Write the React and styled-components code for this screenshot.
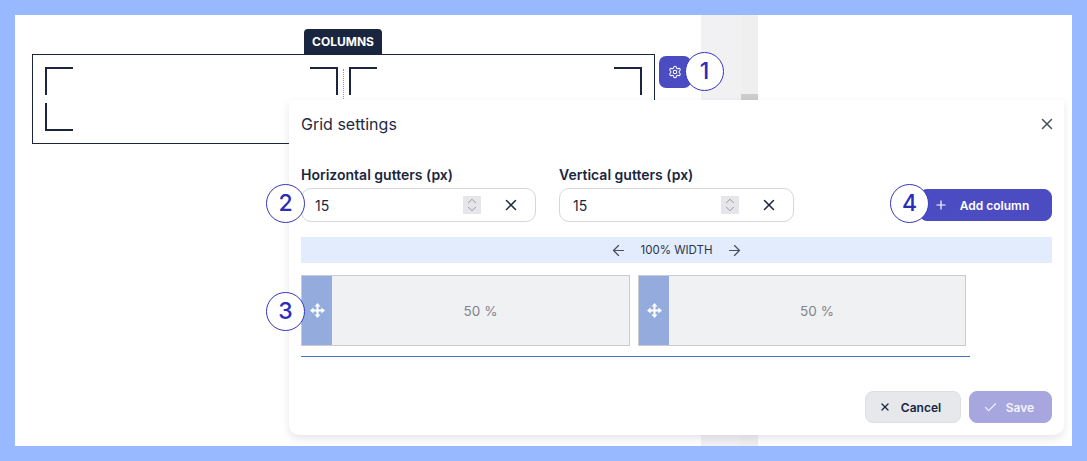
import styled, { createGlobalStyle } from "styled-components";
import { ArrowLeft, ArrowRight, Check, ChevronDown, ChevronUp, Plus, Settings, X } from "lucide-react";

const GlobalStyle = createGlobalStyle`
  html, body {
    margin: 0;
    background: #fff;
  }
  body {
    font-family: Inter, "Liberation Sans", sans-serif;
    color: #1a2640;
  }
  * {
    box-sizing: border-box;
  }
`;

const Frame = styled.div`
  position: relative;
  width: 1087px;
  height: 461px;
  border: 15px solid #98b9ff;
  display: flex;
  overflow: hidden;
`;

const Canvas = styled.div`
  width: 686px;
  padding: 39px 0 0 17px;
  display: flex;
  align-items: flex-start;
  gap: 4px;
`;

const Strip = styled.div`
  width: 57px;
  display: flex;
`;

const StripLeft = styled.div`
  width: 40px;
  background: #f1f1f3;
`;

const StripRight = styled.div`
  flex: 1;
  background: #efefef;
  padding-top: 79px;
`;

const Thumb = styled.div`
  height: 30px;
  background: #cccccc;
`;

const Widget = styled.div`
  position: relative;
  width: 623px;
  height: 90px;
  border: 1px solid #1a2640;
  padding: 12px;
  display: flex;
  justify-content: space-between;
`;

const WidgetTab = styled.div`
  position: absolute;
  left: 271px;
  top: -26px;
  width: 78px;
  height: 25px;
  background: #1a2640;
  color: #fff;
  border-radius: 4px 4px 0 0;
  font-size: 12px;
  font-weight: 700;
  display: flex;
  align-items: center;
  justify-content: center;
`;

const WidgetColumn = styled.div`
  width: 293px;
  display: grid;
  grid-template-columns: 28px 28px;
  grid-template-rows: 28px 28px;
  justify-content: space-between;
  row-gap: 8px;
`;

const Divider = styled.div`
  position: absolute;
  left: 310px;
  top: 14px;
  height: 60px;
  border-left: 1px dotted #999;
`;

const Corner = styled.span`
  border-style: solid;
  border-color: #1a2640;
  border-width: ${(p) => (p.$bottom ? "0 0 2px" : "2px 0 0")};
  border-left-width: ${(p) => (p.$right ? 0 : "2px")};
  border-right-width: ${(p) => (p.$right ? "2px" : 0)};
`;

const GearButton = styled.button`
  position: relative;
  width: 32px;
  height: 32px;
  margin-top: 2px;
  border: 0;
  border-radius: 7px;
  background: #4c4cc2;
  color: #fff;
  display: flex;
  align-items: center;
  justify-content: center;
  padding: 0;
`;

const Marker = styled.span`
  position: absolute;
  width: 39px;
  height: 39px;
  border-radius: 50%;
  border: 1.5px solid #3535c0;
  background: #fff;
  color: #2c2cb8;
  font: 500 23px Inter, sans-serif;
  line-height: 1;
  display: flex;
  align-items: center;
  justify-content: center;
  left: ${(p) => p.$left}px;
  top: ${(p) => p.$top}px;
`;

const Modal = styled.div`
  position: absolute;
  left: 274px;
  top: 85px;
  width: 775px;
  height: 335px;
  background: #fff;
  border-radius: 0 0 10px 10px;
  box-shadow: 0 4px 9px rgba(30, 40, 70, 0.11);
  padding: 12px;
  display: flex;
  flex-direction: column;
`;

const ModalHeader = styled.div`
  height: 24px;
  display: flex;
  align-items: center;
  justify-content: space-between;
  color: #4a4f5c;
  svg {
    margin-right: -4px;
  }
`;

const ModalTitle = styled.h2`
  margin: 0;
  font-size: 16px;
  font-weight: 400;
  color: #1f2a44;
`;

const FieldRow = styled.div`
  margin-top: 31px;
  display: flex;
  align-items: flex-end;
  gap: 23px;
`;

const Field = styled.div`
  position: relative;
  width: 235px;
`;

const FieldLabel = styled.label`
  display: block;
  font-size: 14px;
  line-height: 16px;
  font-weight: 600;
  margin-bottom: 5px;
`;

const InputBox = styled.div`
  height: 34px;
  border: 1px solid #d5d7dd;
  border-radius: 10px;
  padding: 0 15px 0 13px;
  display: flex;
  align-items: center;
`;

const ValueInput = styled.input`
  flex: 1;
  min-width: 0;
  border: 0;
  outline: 0;
  padding: 0;
  font: 400 14px Inter, sans-serif;
  color: #1a2640;
  background: transparent;
`;

const Spinner = styled.span`
  width: 18px;
  height: 18px;
  margin-right: 21px;
  background: #e6e6ea;
  color: #8b8d96;
  display: flex;
  flex-direction: column;
  align-items: center;
  justify-content: center;
  svg {
    margin: -3px 0;
  }
`;

const Button = styled.button`
  height: 32px;
  border-radius: 8px;
  border: 1px solid ${(p) => p.$border};
  background: ${(p) => p.$bg};
  color: ${(p) => p.$color};
  font: 600 12px Inter, sans-serif;
  display: flex;
  align-items: center;
  justify-content: center;
  gap: ${(p) => p.$gap}px;
  padding: 0 ${(p) => p.$trail}px 0 0;
  width: ${(p) => p.$width}px;
`;

const AddButton = styled(Button)`
  position: relative;
  margin-left: auto;
  margin-bottom: 1px;
`;

const WidthBar = styled.div`
  margin-top: 15px;
  height: 26px;
  background: #e2ecfc;
  color: #2b3550;
  font-size: 11.5px;
  display: flex;
  align-items: center;
  justify-content: center;
  gap: 13px;
  svg {
    color: #4a4f5c;
  }
`;

const ColumnList = styled.div`
  position: relative;
  margin-top: 12px;
  width: 669px;
  height: 82px;
  padding-bottom: 10px;
  border-bottom: 1px solid #4a74c8;
  display: flex;
  gap: 8px;
`;

const ColumnCard = styled.div`
  width: ${(p) => p.$width}px;
  border: 1px solid #c9cad2;
  background: #f0f1f3;
  display: flex;
`;

const DragHandle = styled.span`
  width: 30px;
  background: #93acdd;
  color: #fff;
  display: flex;
  align-items: center;
  justify-content: center;
`;

const ColumnValue = styled.span`
  flex: 1;
  font-size: 13.5px;
  color: #80838f;
  display: flex;
  align-items: center;
  justify-content: center;
`;

const ModalFooter = styled.div`
  margin-top: auto;
  display: flex;
  justify-content: flex-end;
  gap: 8px;
`;

function MoveIcon() {
  return (
    <svg width="15" height="15" viewBox="0 0 15 15" fill="currentColor">
      <path d="M7.5 0 10.5 3.6H4.5zM7.5 15 4.5 11.4h6zM0 7.5 3.6 4.5v6zM15 7.5 11.4 10.5v-6z" />
      <path d="M7.5 3v9M3 7.5h9" stroke="currentColor" strokeWidth="2" />
    </svg>
  );
}

function GutterInput() {
  return (
    <InputBox>
      <ValueInput readOnly value="15" />
      <Spinner>
        <ChevronUp size={14} strokeWidth={1.5} />
        <ChevronDown size={14} strokeWidth={1.5} />
      </Spinner>
      <X size={18} strokeWidth={2} />
    </InputBox>
  );
}

export default function App() {
  return (
    <Frame>
      <GlobalStyle />
      <Canvas>
        <Widget>
          <WidgetTab>COLUMNS</WidgetTab>
          <WidgetColumn>
            <Corner />
            <Corner $right />
            <Corner $bottom />
            <Corner $bottom $right />
          </WidgetColumn>
          <Divider />
          <WidgetColumn>
            <Corner />
            <Corner $right />
            <Corner $bottom />
            <Corner $bottom $right />
          </WidgetColumn>
        </Widget>
        <GearButton>
          <Settings size={14} strokeWidth={1.75} />
          <Marker $left={26} $top={-4}>1</Marker>
        </GearButton>
      </Canvas>
      <Strip>
        <StripLeft />
        <StripRight>
          <Thumb />
        </StripRight>
      </Strip>
      <Modal>
        <ModalHeader>
          <ModalTitle>Grid settings</ModalTitle>
          <X size={18} strokeWidth={2} />
        </ModalHeader>
        <FieldRow>
          <Field>
            <FieldLabel>Horizontal gutters (px)</FieldLabel>
            <GutterInput />
            <Marker $left={-35} $top={17}>2</Marker>
          </Field>
          <Field>
            <FieldLabel>Vertical gutters (px)</FieldLabel>
            <GutterInput />
          </Field>
          <AddButton $width={133} $gap={12} $trail={8} $bg="#4c4cc2" $border="#4c4cc2" $color="#fff">
            <Plus size={14} strokeWidth={2} />
            Add column
            <Marker $left={-30} $top={-6}>4</Marker>
          </AddButton>
        </FieldRow>
        <WidthBar>
          <ArrowLeft size={17} strokeWidth={1.75} />
          <span>100% WIDTH</span>
          <ArrowRight size={17} strokeWidth={1.75} />
        </WidthBar>
        <ColumnList>
          <ColumnCard $width={329}>
            <DragHandle><MoveIcon /></DragHandle>
            <ColumnValue>50 %</ColumnValue>
          </ColumnCard>
          <ColumnCard $width={328}>
            <DragHandle><MoveIcon /></DragHandle>
            <ColumnValue>50 %</ColumnValue>
          </ColumnCard>
          <Marker $left={-35} $top={17}>3</Marker>
        </ColumnList>
        <ModalFooter>
          <Button $width={96} $gap={10} $trail={6} $bg="#e6e8ec" $border="#dcdee3" $color="#1a2640">
            <X size={12} strokeWidth={2.5} />
            Cancel
          </Button>
          <Button $width={83} $gap={8} $trail={4} $bg="#a8a6df" $border="#a8a6df" $color="#f4f4fb">
            <Check size={15} strokeWidth={1.75} />
            Save
          </Button>
        </ModalFooter>
      </Modal>
    </Frame>
  );
}
